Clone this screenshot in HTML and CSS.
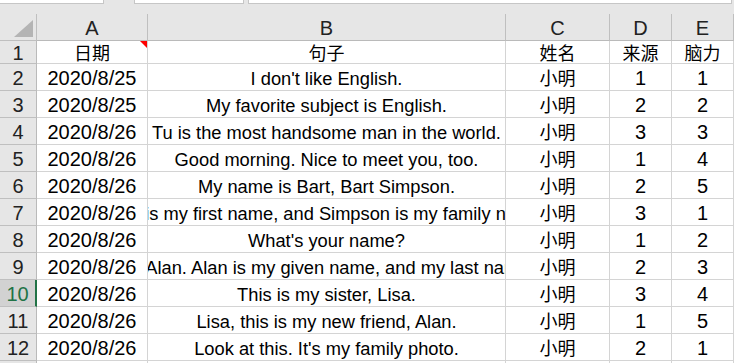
FILE: index.html
```html
<!DOCTYPE html>
<html lang="zh">
<head>
<meta charset="utf-8">
<title>Sheet</title>
<link rel="stylesheet" href="styles.css">
</head>
<body>
<div class="toolbar">
  <div class="box box1"></div>
  <div class="box box2"></div>
  <div class="box box3"></div>
</div>
<div class="sheet">
  <div class="hd corner"><svg class="selall" width="19" height="17" viewBox="0 0 19 17"><polygon points="19,0 19,17 0,17" fill="#b4b4b4"/></svg></div>
  <div class="hd col">A</div>
  <div class="hd col">B</div>
  <div class="hd col">C</div>
  <div class="hd col">D</div>
  <div class="hd col">E</div>

  <div class="hd row">1</div>
  <div class="c cjk note">日期<span class="tri"></span></div>
  <div class="c cjk">句子</div>
  <div class="c cjk">姓名</div>
  <div class="c cjk">来源</div>
  <div class="c cjk">脑力</div>

  <div class="hd row">2</div><div class="c num">2020/8/25</div><div class="c txt"><span>I don't like English.</span></div><div class="c cjk">小明</div><div class="c num">1</div><div class="c num">1</div>
  <div class="hd row">3</div><div class="c num">2020/8/25</div><div class="c txt"><span>My favorite subject is English.</span></div><div class="c cjk">小明</div><div class="c num">2</div><div class="c num">2</div>
  <div class="hd row">4</div><div class="c num">2020/8/26</div><div class="c txt"><span>Tu is the most handsome man in the world.</span></div><div class="c cjk">小明</div><div class="c num">3</div><div class="c num">3</div>
  <div class="hd row">5</div><div class="c num">2020/8/26</div><div class="c txt"><span>Good morning. Nice to meet you, too.</span></div><div class="c cjk">小明</div><div class="c num">1</div><div class="c num">4</div>
  <div class="hd row">6</div><div class="c num">2020/8/26</div><div class="c txt"><span>My name is Bart, Bart Simpson.</span></div><div class="c cjk">小明</div><div class="c num">2</div><div class="c num">5</div>
  <div class="hd row">7</div><div class="c num">2020/8/26</div><div class="c txt"><span>Bart is my first name, and Simpson is my family name.</span></div><div class="c cjk">小明</div><div class="c num">3</div><div class="c num">1</div>
  <div class="hd row">8</div><div class="c num">2020/8/26</div><div class="c txt"><span>What's your name?</span></div><div class="c cjk">小明</div><div class="c num">1</div><div class="c num">2</div>
  <div class="hd row">9</div><div class="c num">2020/8/26</div><div class="c txt"><span>My name is Alan. Alan is my given name, and my last name is Wood.</span></div><div class="c cjk">小明</div><div class="c num">2</div><div class="c num">3</div>
  <div class="hd row sel">10</div><div class="c num">2020/8/26</div><div class="c txt"><span>This is my sister, Lisa.</span></div><div class="c cjk">小明</div><div class="c num">3</div><div class="c num">4</div>
  <div class="hd row">11</div><div class="c num">2020/8/26</div><div class="c txt"><span>Lisa, this is my new friend, Alan.</span></div><div class="c cjk">小明</div><div class="c num">1</div><div class="c num">5</div>
  <div class="hd row">12</div><div class="c num">2020/8/26</div><div class="c txt"><span>Look at this. It's my family photo.</span></div><div class="c cjk">小明</div><div class="c num">2</div><div class="c num">1</div>
  <div class="hd row"></div><div class="c"></div><div class="c"></div><div class="c"></div><div class="c"></div><div class="c"></div>
</div>
</body>
</html>
```

FILE: styles.css
```css
html, body {
  margin: 0;
  padding: 0;
  background: #e6e6e6;
  overflow: hidden;
  height: 363px;
}
body {
  font-family: "Liberation Sans", "Noto Sans CJK SC", sans-serif;
  color: #000;
}
.toolbar {
  height: 14px;
  display: flex;
  align-items: flex-start;
}
.box {
  height: 3px;
  background: #fff;
  border: 1px solid #c6c6c6;
  border-top: none;
  box-sizing: content-box;
}
.box1 { width: 103px; border-left: none; }
.box2 { width: 108px; margin-left: 30px; }
.box3 { width: 482px; margin-left: 4px; }

.sheet {
  display: grid;
  grid-template-columns: 37px 111px 358px 104px 62px 1fr;
  grid-template-rows: 27px 23px;
  grid-auto-rows: 27px;
}
.sheet > div {
  box-sizing: border-box;
  border-right: 1px solid #d4d4d4;
  border-bottom: 1px solid #d4d4d4;
  display: flex;
  align-items: center;
  justify-content: center;
  overflow: hidden;
  white-space: nowrap;
  min-width: 0;
}
.hd {
  background: #e6e6e6;
  font-size: 20px;
  color: #222;
}
.sheet > .hd {
  border-color: #bfbfbf;
}
.sheet > .col {
  border-bottom-color: #bababa;
  padding-top: 3px;
}
.sheet > .row {
  border-right-color: #bababa;
  padding-top: 2px;
}
.corner {
  align-items: flex-end !important;
  justify-content: flex-end !important;
  padding: 0 3px 3px 0;
}
.selall { display: block; }
.sheet > .sel {
  background: #d2d2d2;
  color: #217346;
  border-right: 2px solid #217346;
}
.c {
  background: #fff;
  font-size: 20px;
  padding-top: 3px;
}
.sheet > .cjk {
  font-size: 18px;
  padding-top: 0;
}
.txt { font-size: 18.3px; }
.txt span { flex: none; }
.note { position: relative; }
.tri {
  position: absolute;
  top: 0;
  right: 0;
  width: 0;
  height: 0;
  border-top: 7px solid #ff0000;
  border-left: 7px solid transparent;
}
```
